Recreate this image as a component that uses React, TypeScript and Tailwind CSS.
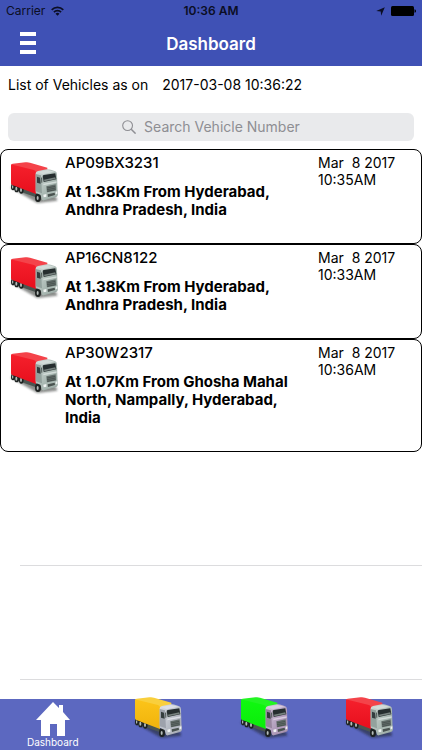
import { useState } from "react";

type Vehicle = {
  number: string;
  location: string;
  date: string;
  time: string;
};

const vehicles: Vehicle[] = [
  {
    number: "AP09BX3231",
    location: "At 1.38Km From Hyderabad, Andhra Pradesh, India",
    date: "Mar  8 2017",
    time: "10:35AM",
  },
  {
    number: "AP16CN8122",
    location: "At 1.38Km From Hyderabad, Andhra Pradesh, India",
    date: "Mar  8 2017",
    time: "10:33AM",
  },
  {
    number: "AP30W2317",
    location: "At 1.07Km From Ghosha Mahal North, Nampally, Hyderabad, India",
    date: "Mar  8 2017",
    time: "10:36AM",
  },
];

const paints = {
  red: { side: "#f5202c", top: "#f4434a", low: "#e80f1d", cab: "#a9b8b2", cabSide: "#93a29d", light: "#d3dcd9" },
  yellow: { side: "#fcc419", top: "#f9cf3c", low: "#f0b30c", cab: "#b4b9c2", cabSide: "#9da2ac", light: "#dcdfe6" },
  green: { side: "#10f910", top: "#22f522", low: "#0aec0a", cab: "#b09cbb", cabSide: "#98869f", light: "#d9cde0" },
};

export default function App() {
  const [query, setQuery] = useState("");
  const shown = vehicles.filter((v) => v.number.toLowerCase().includes(query.toLowerCase()));

  return (
    <div className="flex min-h-screen flex-col bg-white font-['Inter',sans-serif] text-black">
      <header className="bg-[#3f51b5]">
        <StatusBar />
        <div className="grid h-11 grid-cols-[1fr_auto_1fr] items-center px-5">
          <button type="button" aria-label="Menu" className="justify-self-start">
            <MenuIcon />
          </button>
          <h1 className="text-[17px] leading-6 font-semibold text-white">Dashboard</h1>
        </div>
      </header>

      <main className="flex flex-1 flex-col">
        <p className="flex gap-[14px] px-2 pt-[7px] text-sm leading-6">
          <span>List of Vehicles as on</span>
          <time>2017-03-08 10:36:22</time>
        </p>

        <label className="mx-2 mt-4 mb-2 flex h-7 items-center justify-center gap-2 rounded-md bg-[#e9eaec] text-[#8e8e93]">
          <SearchIcon />
          <input
            type="text"
            aria-label="Search Vehicle Number"
            placeholder="Search Vehicle Number"
            value={query}
            onChange={(e) => setQuery(e.target.value)}
            className="field-sizing-content text-sm outline-none placeholder:text-[#8e8e93]"
          />
        </label>

        <ul>
          {shown.map((v) => (
            <VehicleRow key={v.number} vehicle={v} />
          ))}
        </ul>
        <div className="ml-5 h-[114px] border-b border-[#dcdcde]" />
        <div className="ml-5 h-[114px] border-b border-[#dcdcde]" />
      </main>

      <nav className="grid h-[51px] grid-cols-4 bg-[#5c68c0]">
        <a href="#dashboard" className="flex flex-col items-center pt-[3px] text-white">
          <HomeIcon />
          <span className="text-[10px] leading-3">Dashboard</span>
        </a>
        <a href="#yellow" aria-label="Yellow trucks" className="-mt-[2px] flex justify-center">
          <Truck paint="yellow" />
        </a>
        <a href="#green" aria-label="Green trucks" className="-mt-[2px] flex justify-center">
          <Truck paint="green" />
        </a>
        <a href="#red" aria-label="Red trucks" className="-mt-[2px] flex justify-center">
          <Truck paint="red" />
        </a>
      </nav>
    </div>
  );
}

function StatusBar() {
  return (
    <div className="grid h-[22px] grid-cols-[1fr_auto_1fr] items-center px-[6px] text-xs text-[#0b0e24]">
      <div className="flex items-center gap-[6px]">
        <span>Carrier</span>
        <svg viewBox="0 0 13 10" className="h-[10px] w-[13px]" fill="none" stroke="currentColor" strokeWidth="1.7">
          <path d="M.7 3.800a8.200 8.200 0 0 1 11.600 0" />
          <path d="M2.900 6.200a5.100 5.100 0 0 1 7.200 0" />
          <path d="M6.500 9.800 4.500 7.700a2.800 2.800 0 0 1 4 0Z" fill="currentColor" stroke="none" />
        </svg>
      </div>
      <span className="font-semibold">10:36 AM</span>
      <div className="flex items-center justify-end gap-[6px]">
        <svg viewBox="0 0 9 9" className="size-[9px]" fill="currentColor">
          <path d="M8.8.2 5.2 8.8 4.7 4.5.2 3.9Z" />
        </svg>
        <svg viewBox="0 0 25 10" className="h-[10px] w-[25px]" fill="#000">
          <rect width="23" height="10" rx="1.5" />
          <path d="M23.5 3.2c1 .2 1.5.9 1.5 1.8s-.5 1.6-1.5 1.8Z" />
        </svg>
      </div>
    </div>
  );
}

function VehicleRow({ vehicle }: { vehicle: Vehicle }) {
  return (
    <li className="flex rounded-lg border border-black pt-1 pb-6 pl-2">
      <div className="w-14 shrink-0 pt-2">
        <Truck paint="red" />
      </div>
      <div className="min-w-0 flex-1 pr-3">
        <h2 className="text-[15px] leading-[18px] font-medium">{vehicle.number}</h2>
        <p className="mt-[11px] text-[15px] leading-[18px] font-bold">{vehicle.location}</p>
      </div>
      <p className="w-[103px] shrink-0 text-sm leading-[17px] whitespace-pre">
        {vehicle.date}
        <br />
        {vehicle.time}
      </p>
    </li>
  );
}

function Truck({ paint }: { paint: keyof typeof paints }) {
  const c = paints[paint];
  return (
    <svg viewBox="27 26 150 132" className="h-11 w-[50px] overflow-visible" aria-hidden="true">
      <defs>
        <filter id={`soft-${paint}`} x="-20%" y="-60%" width="140%" height="220%">
          <feGaussianBlur stdDeviation="3" />
        </filter>
        <linearGradient id={`side-${paint}`} x1="0" y1="0" x2="0" y2="1">
          <stop offset="0" stopColor={c.side} />
          <stop offset="1" stopColor={c.low} />
        </linearGradient>
        <linearGradient id={`cab-${paint}`} x1="0" y1="0" x2="1" y2="1">
          <stop offset="0" stopColor={c.light} />
          <stop offset="0.6" stopColor={c.cab} />
          <stop offset="1" stopColor={c.cabSide} />
        </linearGradient>
      </defs>
      {/* shadow on the ground */}
      <path d="M30 102 112 149 172 142 168 130 60 100Z" fill="#141a18" opacity="0.5" filter={`url(#soft-${paint})`} />
      {/* chassis and wheels */}
      <path d="M34 88 108 113V132L36 106Z" fill="#4b5551" />
      <g fill="#1d2221">
        <ellipse cx="39" cy="101" rx="6" ry="10" />
        <ellipse cx="50" cy="106" rx="7" ry="11" />
        <ellipse cx="64" cy="110" rx="7" ry="11" />
        <ellipse cx="114" cy="133" rx="9" ry="13" />
      </g>
      <g fill="#b5bdba">
        <ellipse cx="38" cy="101" rx="2" ry="5" />
        <ellipse cx="49" cy="106" rx="3" ry="6" />
        <ellipse cx="63" cy="110" rx="3" ry="6" />
        <ellipse cx="113" cy="134" rx="3" ry="6" />
      </g>
      {/* container */}
      <path d="M33 36Q33 32 38 31L76 27Q84 26 90 28L142 43V56L106 60Z" fill={c.top} />
      <path d="M33 36Q33 33 38 34L102 50Q108 52 108 58V122L37 95Q33 94 33 90Z" fill={`url(#side-${paint})`} />
      {/* cab */}
      <path d="M107 60Q107 55 114 53L140 48Q148 47 155 50L166 54Q171 57 171 63L173 124Q173 129 168 131L132 141Q126 142 125 136L122 125 107 118Z" fill={`url(#cab-${paint})`} />
      <path d="M107 62 123 66 126 120 107 114Z" fill={c.cabSide} />
      <path d="M111 70 120 73 122 91 111 88Z" fill="#343d3e" />
      <path d="M112 56 142 50 164 55 128 63Z" fill={c.light} />
      <path d="M128 68Q128 66 131 65L166 60 169 78 131 86Z" fill="#262e2f" />
      <path d="M132 79 166 72 167 77 133 84Z" fill="#77827f" />
      <path d="M130 91 170 84V88L130 96Z" fill={c.light} />
      <path d="M139 99 167 93 168 113 141 119Z" fill="#626d6a" />
      <path d="M141 104 166 99M141 109 167 104M142 114 167 109" stroke="#3f4845" strokeWidth="2" />
      <path d="M128 120 172 111 173 126 129 138Z" fill={c.cab} />
      <path d="M143 123 164 118 165 125 144 131Z" fill="#4a5350" />
      <path d="M130 124 139 122 139 130 131 132Z" fill="#f1f4f3" />
      <path d="M167 115 172 114 172 121 167 122Z" fill="#f1f4f3" />
      <path d="M123 73 127 72 127 88 124 88Z" fill="#525c59" />
    </svg>
  );
}

function MenuIcon() {
  return (
    <svg viewBox="0 0 16 24" className="h-6 w-4" fill="#fff">
      <rect width="16" height="4" y="0" />
      <rect width="16" height="4" y="9" />
      <rect width="16" height="4" y="18" />
    </svg>
  );
}

function SearchIcon() {
  return (
    <svg viewBox="0 0 14 14" className="size-[14px]" fill="none" stroke="currentColor" strokeWidth="1.1">
      <circle cx="5.6" cy="5.6" r="4.9" />
      <path d="m9.2 9.2 4.4 4.4" strokeWidth="1.5" />
    </svg>
  );
}

function HomeIcon() {
  return (
    <svg viewBox="0 0 34 34" className="h-[34px] w-[34px]" fill="#fff">
      <path d="M17 0 23 6V3H27V10L34 18H29V34H21V22H14V34H5V18H0Z" />
    </svg>
  );
}
